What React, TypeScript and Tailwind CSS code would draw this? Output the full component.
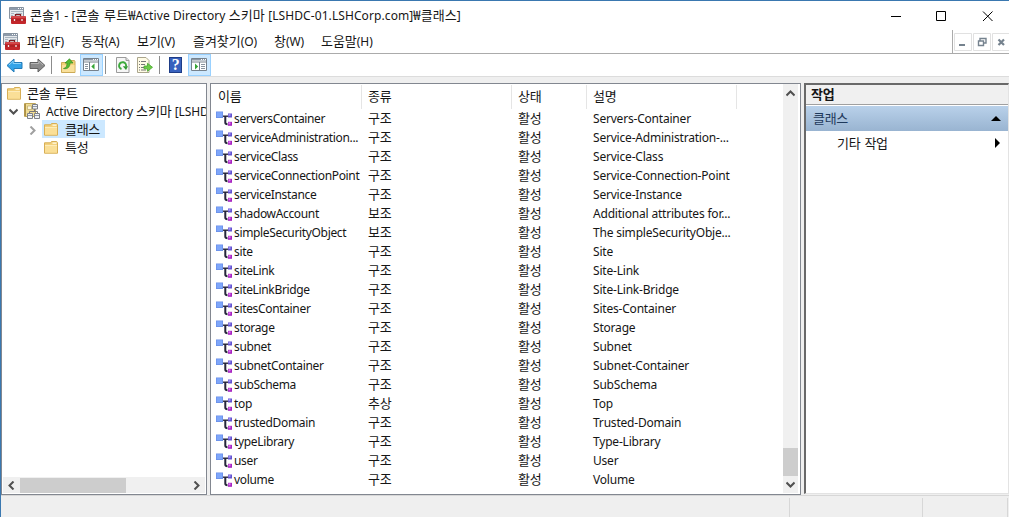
import React from "react";

const rows: [string, string, string, string][] = [
  ["serversContainer", "구조", "활성", "Servers-Container"],
  ["serviceAdministration...", "구조", "활성", "Service-Administration-..."],
  ["serviceClass", "구조", "활성", "Service-Class"],
  ["serviceConnectionPoint", "구조", "활성", "Service-Connection-Point"],
  ["serviceInstance", "구조", "활성", "Service-Instance"],
  ["shadowAccount", "보조", "활성", "Additional attributes for..."],
  ["simpleSecurityObject", "보조", "활성", "The simpleSecurityObje..."],
  ["site", "구조", "활성", "Site"],
  ["siteLink", "구조", "활성", "Site-Link"],
  ["siteLinkBridge", "구조", "활성", "Site-Link-Bridge"],
  ["sitesContainer", "구조", "활성", "Sites-Container"],
  ["storage", "구조", "활성", "Storage"],
  ["subnet", "구조", "활성", "Subnet"],
  ["subnetContainer", "구조", "활성", "Subnet-Container"],
  ["subSchema", "구조", "활성", "SubSchema"],
  ["top", "추상", "활성", "Top"],
  ["trustedDomain", "구조", "활성", "Trusted-Domain"],
  ["typeLibrary", "구조", "활성", "Type-Library"],
  ["user", "구조", "활성", "User"],
  ["volume", "구조", "활성", "Volume"],
];

/* Splits a label into Hangul and Latin runs so each gets its own face and size. */
function T({ children, className = "" }: { children: string; className?: string }) {
  const parts = children.split(/([\uac00-\ud7a3₩]+(?: [\uac00-\ud7a3₩]+)*)/).filter(Boolean);
  return (
    <span className={"whitespace-pre " + className}>
      {parts.map((p, i) =>
        /[\uac00-\ud7a3₩]/.test(p) ? (
          <span key={i} className="text-[13px] [word-spacing:1.5px] font-['Noto_Sans_CJK_KR',sans-serif]">{p}</span>
        ) : (
          <span key={i}>{p}</span>
        )
      )}
    </span>
  );
}

function ConsoleIcon() {
  return (
    <svg width="17" height="17" viewBox="0 0 17 17" className="shrink-0">
      <path d="M.5.5h14v11H.5z" fill="#e4e8ec" stroke="#8793a0" />
      <path d="M1 1h13v2H1z" fill="#8d9aaa" />
      <path d="M9 1.500h1M11 1.500h1M13 1.500h1" stroke="#fff" />
      <path d="M2 4.500h12M2 6.500h3M2 8.500h2M7 6.500h6" stroke="#a9b4bf" />
      <path d="M6.500 9.500V7.700h5v1.800" fill="none" stroke="#7d1f22" strokeWidth="1.3" />
      <rect x="2" y="9" width="15" height="8" rx="1" fill="#c3272b" />
      <path d="M2.500 10h14" stroke="#e2686a" />
      <path d="M2 13h15" stroke="#9d1b1e" />
      <path d="M5.500 12v2M13 12v2" stroke="#f5e7e7" strokeWidth="1.3" />
    </svg>
  );
}

function Folder() {
  return (
    <svg width="14" height="13" viewBox="0 0 14 13" className="shrink-0">
      <path d="M.5 1.800h6l1-1.300h5.200l.8 1v10.700H.5z" fill="#f3d17c" stroke="#d7ae55" />
      <path d="M8.500 1.500h4v1.300h-4z" fill="#fff8e2" />
      <path d="M1 4.500h12v7.200H1z" fill="#fadf97" />
      <path d="M1 4.500h12" stroke="#fdecbb" />
    </svg>
  );
}

function SchemaIcon() {
  return (
    <svg width="17" height="16" viewBox="0 0 17 16" className="shrink-0">
      <path d="M.5.5h11v13H.5z" fill="#f0dc94" stroke="#c0a65a" />
      <path d="M1.200 1v12" stroke="#a98d43" strokeWidth="1.5" />
      <path d="M3.500 3h4v3.500h-4z" fill="#fdf7dc" stroke="#b9a86d" strokeWidth=".7" />
      <path d="M10.500 6v3M5.500 11V8.500h8V11" fill="none" stroke="#777" />
      <path d="M8.500 1.500h5v4.500h-5zM3.500 10.500h5v5h-5zM10.500 10.500h5v5h-5z" fill="#eef1f5" stroke="#7c8087" />
      <path d="M9 3.500h4M4 12.500h4M11 12.500h4" stroke="#8f98a5" />
    </svg>
  );
}

function ClassIcon() {
  return (
    <svg width="17" height="16" viewBox="0 0 17 16" className="shrink-0">
      <path d="M6 5.200h6" stroke="#26263a" strokeWidth="1.400" />
      <path d="M9.300 5v6.500q0 1.700 2.200 1.700" stroke="#26263a" fill="none" strokeWidth="2" />
      <path d="M0 .5h7v6.500H0z" fill="#6a8fe8" />
      <path d="M.7 1.200h5.500v5H.7z" fill="#7ea6fa" />
      <path d="M12 2.500h4v4h-4z" fill="#6252cf" />
      <path d="M12.500 3h2v2h-2z" fill="#9d8ff2" />
      <path d="M12 10.800h4v4h-4z" fill="#a524c0" />
      <path d="M12.500 11.300h2v2h-2z" fill="#e077f2" />
    </svg>
  );
}

function Chevron({ d, light = false }: { d: string; light?: boolean }) {
  return (
    <svg width="9" height="9" viewBox="0 0 9 9" className="shrink-0">
      <path d={d} fill="none" stroke={light ? "#a0a0a0" : "#505050"} strokeWidth="2" />
    </svg>
  );
}

function Arrow({ right = false }: { right?: boolean }) {
  return (
    <svg width="17" height="15" viewBox="0 0 17 15" className={right ? "-scale-x-100" : ""}>
      <path d="M1 7.500 8 1v3.500h8v6H8V14z" fill={right ? "#8b8b8b" : "#33a3e8"} stroke={right ? "#626262" : "#237bb8"} strokeLinejoin="round" />
      <path d="M3 7 7.200 3.200v2.300H15" fill="none" stroke={right ? "#b7b7b7" : "#8bd3fa"} />
    </svg>
  );
}

function PanelIcon({ right = false }: { right?: boolean }) {
  return (
    <svg width="17" height="14" viewBox="0 0 17 14">
      <path d="M.5.5h15v12H.5z" fill="#fff" stroke="#76818c" />
      <path d="M1 1h14v1.500H1z" fill="#8d98a5" />
      <path d="M10 1.500h1M12 1.500h1M14 1.500h1" stroke="#fff" />
      <path d="M1 4h14" stroke="#76818c" />
      {right ? (
        <>
          <path d="M8.500 4v8.500" stroke="#76818c" />
          <path d="M10 6.500h4M10 8.500h4M10 10.500h4" stroke="#8a949e" />
          <path d="M4 5.500v6L7.200 8.500z" fill="#35a534" />
        </>
      ) : (
        <>
          <path d="M6.500 4v8.500" stroke="#76818c" />
          <path d="M2 6.500h3M2 8.500h3M2 10.500h3" stroke="#8a949e" />
          <path d="M11.500 5.500v6L8.300 8.500z" fill="#35a534" />
        </>
      )}
    </svg>
  );
}

function Page({ kind }: { kind: "refresh" | "export" }) {
  return kind === "refresh" ? (
    <svg width="14" height="16" viewBox="0 0 14 16">
      <path d="M.5.5h9.500l3 3v12H.5z" fill="#f6f6f6" stroke="#9b9b9b" />
      <path d="M10 .5v3h3" fill="#ddd" stroke="#9b9b9b" />
      <path d="M5.500 12A3.500 3.500 0 1 1 10 9.500" fill="none" stroke="#3daa3d" strokeWidth="2" />
      <path d="M6.800 9.200h5.200L10 13z" fill="#2f9a33" />
    </svg>
  ) : (
    <svg width="16" height="16" viewBox="0 0 16 16">
      <path d="M.5.5h8.500l3 3v12H.5z" fill="#fffbe5" stroke="#aaa58c" />
      <path d="M2 4.500h1M2 7.500h1M2 10.500h1M2 13h1M4 4.500h5M4 7.500h4M4 10.500h3M4 13h5" stroke="#777" />
      <path d="M7 9h3.500V6.300l5 4-5 4v-2.500H7z" fill="#6dcc46" stroke="#45a52d" strokeWidth=".8" />
    </svg>
  );
}

function UpFolder() {
  return (
    <svg width="15" height="15" viewBox="0 0 15 15">
      <path d="M.5 4.500h7l1-2h5l.5 1v11H.5z" fill="#f2d178" stroke="#ccaa56" />
      <path d="M1 7h12.500v7H1z" fill="#f9e09b" />
      <path d="M2.500 10.500c3-.5 3.500-3 3.500-5.500H4L8.500 .8 12 5H9c0 4-2.500 6.500-6.500 5.500z" fill="#55bb32" stroke="#358d22" strokeWidth=".7" />
    </svg>
  );
}

const Sep = () => <div className="h-[18px] w-px bg-[#8c8c8c]" />;

export default function App() {
  return (
    <div className="flex h-[517px] w-[1009px] flex-col overflow-hidden border-l border-t border-[#3a78b0] bg-[#efefef] font-['Noto_Sans','Noto_Sans_CJK_KR',sans-serif] text-[12px] leading-[18px] tracking-[-0.3px] text-[#161616]">
      <header className="flex h-[29px] shrink-0 items-center bg-white pl-2">
        <ConsoleIcon />
        <T className="ml-1 tracking-[0.09px]">콘솔1 - [콘솔 루트₩Active Directory 스키마 [LSHDC-01.LSHCorp.com]₩클래스]</T>
        <svg className="ml-auto mr-[15px]" width="103" height="12" viewBox="0 0 103 12">
          <path d="M0 6.500h10M45.500 1.500h9v9h-9zM92 1.500l9.500 9.500M101.500 1.500 92 11" fill="none" stroke="#000" />
        </svg>
      </header>

      <div className="flex h-[24px] shrink-0 items-stretch bg-white">
        <nav className="flex grow items-center border-b border-[#ababab] pl-[2px] tracking-[-0.05px]">
          <ConsoleIcon />
          <T className="ml-[7px] w-[54px]">파일(F)</T>
          <T className="w-[56px]">동작(A)</T>
          <T className="w-[56px]">보기(V)</T>
          <T className="w-[81px]">즐겨찾기(O)</T>
          <T className="w-[47px]">창(W)</T>
          <T>도움말(H)</T>
        </nav>
        <div className="flex w-[57px] items-center border-b border-l border-[#ababab] pl-px">
          <svg width="56" height="18" viewBox="0 0 56 18" className="shrink-0">
            <path d="M.5.5h17v17H.5zM19.500.5h17v17h-17zM38.500.5h17v17h-17z" fill="#fff" stroke="#e1e1e1" />
            <path d="M5 12h6" stroke="#75828e" strokeWidth="2" />
            <path d="M26 8V5.500h6V10h-2M24.500 8h5v4.500h-5z" fill="none" stroke="#75828e" strokeWidth="1.400" />
            <path d="M44.500 6.500l5.500 5.500M50 6.500l-5.500 5.500" stroke="#75828e" strokeWidth="2.200" />
          </svg>
        </div>
      </div>

      <div className="flex h-[23px] shrink-0 items-center border-b border-[#dcdcdc] bg-white pl-[5px]">
        <Arrow />
        <div className="ml-[6px] mr-[5px] flex"><Arrow right /></div>
        <Sep />
        <div className="ml-[9px] mr-[4px]"><UpFolder /></div>
        <div className="flex h-[22px] w-[23px] items-center justify-center border border-[#99d1ff] bg-[#cce8ff]"><PanelIcon /></div>
        <div className="ml-[2px] mr-[10px]"><Sep /></div>
        <Page kind="refresh" />
        <div className="ml-[7px] mr-[6px]"><Page kind="export" /></div>
        <Sep />
        <div className="ml-[9px] mr-[6px] flex h-4 w-[13px] items-center justify-center border border-[#1e3c86] bg-[#3861bd] font-['Liberation_Serif',serif] text-[16px] font-bold text-white">?</div>
        <div className="flex h-[22px] w-[23px] items-center justify-center border border-[#99d1ff] bg-[#cce8ff]"><PanelIcon right /></div>
      </div>

      <main className="mt-[6px] flex h-[412px] shrink-0">
        <aside className="flex w-[206px] flex-col border border-[#828790] bg-white pb-px">
          <div className="flex h-[18px] items-center pl-[5px]"><Folder /><T className="ml-[6px]">콘솔 루트</T></div>
          <div className="flex h-[18px] items-center overflow-hidden pl-[7px]">
            <Chevron d="M.5 2.500l4 4 4-4" />
            <div className="ml-[6px]"><SchemaIcon /></div>
            <T className="ml-[5px] tracking-[-0.1px]">Active Directory 스키마 [LSHD</T>
          </div>
          <div className="flex h-[18px] items-center pl-[26px]">
            <div className="pt-[2px]"><Chevron d="M2.500.5l4 4-4 4" light /></div>
            <div className="ml-[5px] flex h-[18px] w-[63px] items-center bg-[#cce8ff] pl-[2px]"><Folder /><T className="ml-[7px]">클래스</T></div>
          </div>
          <div className="flex h-[18px] items-center pl-[42px]"><Folder /><T className="ml-[7px]">특성</T></div>
          <div className="mx-px mt-auto flex h-4 items-center bg-[#f0f0f0] px-1">
            <Chevron d="M6.500.5l-4 4 4 4" />
            <div className="ml-[4px] h-[15px] w-[106px] bg-[#cdcdcd]" />
            <div className="ml-auto"><Chevron d="M2.500.5l4 4-4 4" /></div>
          </div>
        </aside>

        <section className="ml-[3px] flex w-[591px] border border-[#828790] bg-white pb-px pr-[2px]">
          <div className="min-w-0 grow">
            <div className="flex h-[25px] items-end">
              <div className="flex h-[24px] w-[151px] items-center border-r border-[#e5e5e5] pb-[2px] pl-[7px]"><T>이름</T></div>
              <div className="flex h-[24px] w-[150px] items-center border-r border-[#e5e5e5] pb-[2px] pl-[6px]"><T>종류</T></div>
              <div className="flex h-[24px] w-[75px] items-center border-r border-[#e5e5e5] pb-[2px] pl-[6px]"><T>상태</T></div>
              <div className="flex h-[24px] w-[150px] items-center border-r border-[#e5e5e5] pb-[2px] pl-[6px]"><T>설명</T></div>
            </div>
            {rows.map(([name, kind, state, desc]) => (
              <div key={name} className="flex h-[19px] items-center">
                <div className="flex w-[157px] items-center pl-[5px]"><ClassIcon /><T className="ml-px tracking-[-0.34px]">{name}</T></div>
                <T className="w-[150px]">{kind}</T>
                <T className="w-[75px]">{state}</T>
                <T className="tracking-[-0.2px]">{desc}</T>
              </div>
            ))}
          </div>
          <div className="flex w-[15px] shrink-0 flex-col items-center bg-[#f0f0f0] pb-[4px] pt-[5px]">
            <Chevron d="M.5 6.500l4-4 4 4" />
            <div className="mb-[4px] mt-auto h-[28px] w-[15px] bg-[#cdcdcd]" />
            <Chevron d="M.5 2.500l4 4 4-4" />
          </div>
        </section>

        <aside className="ml-[3px] flex h-[411px] w-[205px] flex-col border-b border-l-2 border-r border-t-2 border-b-[#e3e3e3] border-l-[#696969] border-r-[#e3e3e3] border-t-[#696969] bg-white">
          <div className="flex h-[20px] items-center border-b border-[#a0a0a0] bg-[#f0f0f0] pl-[5px] font-bold"><T>작업</T></div>
          <div className="mt-px flex h-[25px] items-center justify-between bg-linear-to-b from-[#b9d1ea] to-[#99b4d1] pl-[7px] pr-[7px] text-[#1e395b]">
            <T>클래스</T>
            <svg width="10" height="5" viewBox="0 0 10 5"><path d="M5 0l5 5H0z" fill="#000" /></svg>
          </div>
          <div className="flex h-[24px] items-center justify-between pl-[31px] pr-[8px]">
            <T>기타 작업</T>
            <svg width="5" height="10" viewBox="0 0 5 10"><path d="M0 0l5 5-5 5z" fill="#000" /></svg>
          </div>
        </aside>
      </main>

      <footer className="flex grow border-t border-[#d7d7d7] pt-[2px]">
        <div className="h-[19px] w-[789px] border-r border-[#d7d7d7]" />
        <div className="h-[19px] w-[133px] border-r border-[#d7d7d7]" />
        <div className="h-[19px] w-[85px] border-r border-[#d7d7d7]" />
      </footer>
    </div>
  );
}
